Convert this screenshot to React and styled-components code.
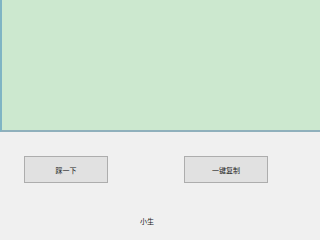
import React from "react";
import styled, { createGlobalStyle } from "styled-components";

const GlobalStyle = createGlobalStyle`
  html, body {
    margin: 0;
    padding: 0;
    background: #f0f0f0;
  }
  body {
    font-family: "Noto Sans CJK SC", "Liberation Sans", sans-serif;
  }
`;

const Window = styled.div`
  width: 320px;
  height: 240px;
  display: flex;
  flex-direction: column;
  background: #f0f0f0;
  overflow: hidden;
`;

const TextArea = styled.textarea`
  box-sizing: border-box;
  width: 320px;
  height: 132px;
  margin: 0;
  padding: 0;
  resize: none;
  background: #cce8cf;
  border: none;
  border-left: 2px solid #7fb4c4;
  border-bottom: 2px solid #8fb0bc;
  outline: none;
`;

const ButtonRow = styled.div`
  display: flex;
  gap: 76px;
  padding: 24px 0 0 24px;
`;

const Button = styled.button`
  box-sizing: border-box;
  width: 84px;
  height: 27px;
  margin: 0;
  padding: 0;
  background: #e1e1e1;
  border: 1px solid #adadad;
  font-family: "Noto Sans CJK SC", sans-serif;
  font-size: 7px;
  color: #1a1a1a;
`;

const Footer = styled.div`
  margin-top: 32px;
  padding-left: 140px;
  font-size: 7px;
  line-height: 12px;
  color: #1a1a1a;
`;

export default function App() {
  return (
    <>
      <GlobalStyle />
      <Window>
        <TextArea />
        <ButtonRow>
          <Button>踩一下</Button>
          <Button>一键复制</Button>
        </ButtonRow>
        <Footer>小生</Footer>
      </Window>
    </>
  );
}
